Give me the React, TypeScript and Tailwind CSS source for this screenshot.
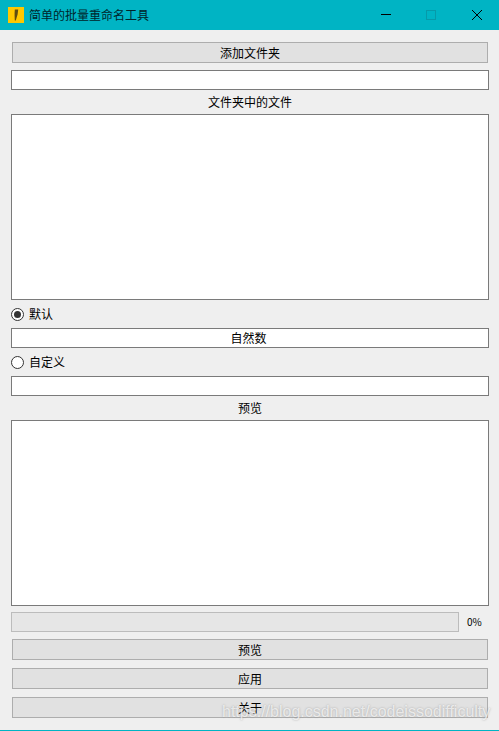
function PushButton({ label }: { label: string }) {
  return (
    <button
      type="button"
      className="mx-px flex h-[21px] shrink-0 items-center justify-center border border-[#adadad] bg-[#e1e1e1] text-xs leading-none text-black"
    >
      {label}
    </button>
  );
}

function LineEdit({ value = "" }: { value?: string }) {
  return (
    <div className="flex h-5 shrink-0 items-center justify-center border border-[#7a7a7a] bg-white pr-[3px] text-xs leading-none text-black">
      {value}
    </div>
  );
}

function SectionLabel({ label }: { label: string }) {
  return <div className="flex h-6 shrink-0 items-center justify-center text-xs leading-none text-black">{label}</div>;
}

function RadioRow({ label, checked }: { label: string; checked?: boolean }) {
  return (
    <label className="flex h-7 shrink-0 items-center gap-[5px] text-xs leading-none text-black">
      <span className="flex size-[13px] items-center justify-center rounded-full border border-[#333333] bg-white">
        {checked && <span className="size-[7px] rounded-full bg-[#333333]" />}
      </span>
      {label}
    </label>
  );
}

function FileList() {
  return <div className="h-[186px] shrink-0 border border-[#7a7a7a] bg-white" />;
}

export default function App() {
  return (
    <div
      className="relative flex h-[731px] w-[499px] flex-col overflow-hidden bg-[#efefef]"
      style={{ fontFamily: '"Noto Sans CJK SC", "Liberation Sans", sans-serif' }}
    >
      <div className="flex h-[30px] shrink-0 items-center bg-[#00b4c4] pl-2">
        <div className="flex size-4 items-center justify-center bg-[#ffc800]">
          <svg width="6" height="12" viewBox="0 0 6 12">
            <path d="M1.8 0.5H5.2L4.6 5.5 3.8 8 2.8 11.5H1.8L1.6 7 1.6 4z" fill="#5f4c10" />
          </svg>
        </div>
        <span className="ml-[5px] text-xs leading-none text-[#00252b]">简单的批量重命名工具</span>
        <div className="ml-auto flex h-full">
          <div className="flex w-[46px] items-center justify-center">
            <svg width="10" height="10" viewBox="0 0 10 10">
              <path d="M0 4.5h10" stroke="#000000" strokeWidth="1" />
            </svg>
          </div>
          <div className="mr-0.5 flex w-11 items-center justify-center">
            <svg width="10" height="10" viewBox="0 0 10 10">
              <rect x="0.5" y="0.5" width="9" height="9" fill="none" stroke="#069aa9" strokeWidth="1" />
            </svg>
          </div>
          <div className="flex w-11 items-center justify-center">
            <svg width="10" height="10" viewBox="0 0 10 10">
              <path d="M0 0l10 10M10 0l-10 10" stroke="#000000" strokeWidth="1" />
            </svg>
          </div>
        </div>
      </div>

      <div className="flex flex-1 flex-col px-[10px] pt-3 pl-[11px]">
        <PushButton label="添加文件夹" />
        <div className="mt-[7px]">
          <LineEdit />
        </div>
        <SectionLabel label="文件夹中的文件" />
        <FileList />
        <RadioRow label="默认" checked />
        <LineEdit value="自然数" />
        <RadioRow label="自定义" />
        <LineEdit />
        <SectionLabel label="预览" />
        <FileList />
        <div className="mt-1.5 flex h-5 shrink-0 items-center">
          <div className="h-full w-[448px] border border-[#bcbcbc] bg-[#e6e6e6]" />
          <span className="ml-2 text-[10px] leading-none text-black">0%</span>
        </div>
        <div className="mt-[7px] flex flex-col gap-2">
          <PushButton label="预览" />
          <PushButton label="应用" />
          <PushButton label="关于" />
        </div>
      </div>

      <div className="h-px shrink-0 bg-[#00b4c4]" />

      <div
        className="absolute top-[702px] left-[222px] text-[16px] leading-[20px] whitespace-nowrap text-white/70"
        style={{ fontFamily: '"Liberation Sans", sans-serif', textShadow: "0 0 2px rgba(120,120,120,0.6)" }}
      >
        https://blog.csdn.net/codeissodifficulty
      </div>
    </div>
  );
}
